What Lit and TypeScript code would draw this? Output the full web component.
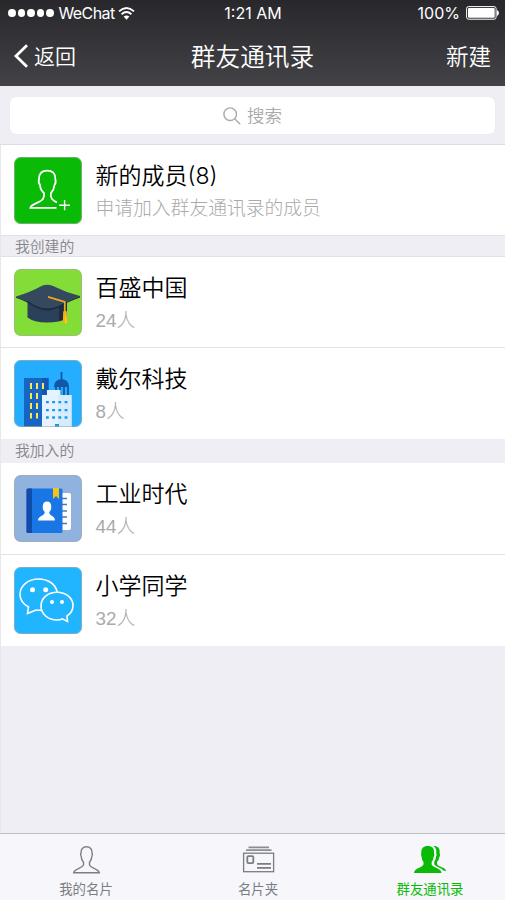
import { LitElement, html, css, svg } from "lit";
import { customElement, property } from "lit/decorators.js";
import { classMap } from "lit/directives/class-map.js";

const art: Record<string, unknown> = {
  add: svg`<rect width="68" height="67" fill="#09bb07"/>
    <path d="M42.5 50.8H16.4C17 46.5 27 45.6 29 41.8Q30.6 39 30 36Q26.3 33 26 28Q24 26 25 22C25 16.5 28 13.6 33.2 13.6C38.5 13.6 41.5 16.5 41.3 22Q42.4 26 40.5 28Q40 33 37 36Q36 39 38 42Q40 44.3 43 45.3" fill="none" stroke="#fff" stroke-width="1.8"/>
    <path d="M45.2 48.3H56M50.6 43V53.3" stroke="#fff" stroke-width="1.4"/>`,
  cap: svg`<rect width="68" height="67" fill="#83dd37"/>
    <path d="M13.5 31H53V49.5Q46 53.5 33 53.5Q20 53.5 13.5 48.5Z" fill="#2b4059"/>
    <path d="M45 34L53 31V49.5L45 51.8Z" fill="#1d2c43"/>
    <path d="M2 27.5Q16 23.5 27 17.3Q33 14.5 39 17Q52 23.5 66 27Q55 30.5 46 36.5Q33 42.5 21 36.5Q13 31 2 27.5Z" fill="#34495e"/>
    <path d="M2 27.5Q13 31 21 36.5Q33 42.5 46 36.5Q55 30.5 66 27V28.6Q55 32 46 38.3Q33 44.5 21 38.3Q13 32.5 2 28.8Z" fill="#1d2c43"/>
    <path d="M34 27.8L50.8 33V44" fill="none" stroke="#f3a51b" stroke-width="1.8"/>
    <path d="M49.2 42.5Q51 41 52.8 42.5L53.2 54.3H48.8Z" fill="#f7ae16"/><path d="M51.5 43L53 54.3H51Z" fill="#ffd11d"/>`,
  city: svg`<rect width="68" height="67" fill="#25aeff"/>
    <path d="M10 18H34.5V67H10Z" fill="#1765c3"/><path d="M28 18H34.5V67H28Z" fill="#1457b2"/>
    <path d="M17 23V29M23 23V29M29 23V29M17 33V39M23 33V39M17 43V49M23 43V49M17 53V58.5M23 53V58.5" stroke="#ffe747" stroke-width="2"/>
    <path d="M47.5 12V20M41 26Q41.5 20.5 47.5 20Q53.5 20.5 54 26ZM42 26V35M46 26V35M50 26V35M54 26V35" fill="#1356a8" stroke="#1356a8" stroke-width="1.8"/>
    <path d="M33 30H46.5V35H57.5V67H28V35H33Z" fill="#e4f3ff"/><path d="M44 35H57.5V67H44Z" fill="#d5ecff"/>
    <path d="M32 42.2H55M32 50.2H55M32 57.5H55" stroke="#1899ef" stroke-width="2.3" stroke-dasharray="2.8 3.4"/>
    <path d="M41 64H45V67H41Z" fill="#1899ef"/>`,
  book: svg`<rect width="68" height="67" fill="#8fb2df"/>
    <rect x="43" y="18" width="14" height="37" rx="2" fill="#fff"/>
    <path d="M48 23.5H53M48 29.5H53M48 36H53M48 42H53M48 48.5H53" stroke="#4c79b4" stroke-width="1.7"/>
    <rect x="12.5" y="13.5" width="36" height="44.5" rx="1.5" fill="#1877e4"/>
    <path d="M14 13.5H18V58H14Q12.5 58 12.5 56.5V15Q12.5 13.5 14 13.5Z" fill="#134bab"/>
    <path d="M39 13H45V24L42 21L39 24Z" fill="#f3c41b"/>
    <path d="M24 45.5C24 40.5 31 41 30.7 37Q28.5 35.5 28.8 32Q28.5 26.5 33 26.5Q37.5 26.5 37.2 32Q37.5 35.5 35.3 37C35 41 41 40.5 41 45.5Z" fill="#fff"/>`,
  chat: svg`<rect width="68" height="67" fill="#22b5ff"/>
    <path d="M28 43Q25.5 43.6 22 43L13.5 46.5L14.5 40C9 37 6 32.5 6 27.5C6 18.5 14.5 12 24.5 12C34 12 41.5 17 43.2 25.2" fill="none" stroke="#fff" stroke-width="1.6"/>
    <path d="M43 25.3C52 25.3 59 31 59 38.5C59 43 57 46.5 53 49L53.5 54.5L48.5 52Q46 53 43 53C34 53 27 47 27 39C27 31 34 25.3 43 25.3Z" fill="none" stroke="#fff" stroke-width="1.6"/>
    <g fill="#fff"><circle cx="18.5" cy="22.7" r="2.5"/><circle cx="31.7" cy="22.7" r="2.5"/><circle cx="38" cy="35" r="2"/><circle cx="48" cy="35" r="2"/></g>`,
};

const tabArt: Record<string, unknown> = {
  card: svg`<path d="M3.6 26.8H29.4C28.5 22.3 20.8 22.5 19.5 19V16.2Q21.7 14 21.8 10.5Q23 8.5 22 7C22.3 3 20 .8 16.5 .8S10.7 3 11 7Q10 8.5 11.2 10.5Q11.3 14 13.5 16.2V19C12.2 22.5 4.5 22.3 3.6 26.8Z" fill="none" stroke="#7a7e83" stroke-width="1.4"/>`,
  folder: svg`<path d="M6.5 1.4H27M4 4.2H29.5" stroke="#8b8e93" stroke-width="1.7"/><rect x="1.6" y="7.2" width="30" height="18.5" fill="none" stroke="#7a7e83" stroke-width="1.3"/>
    <rect x="5.3" y="10.1" width="6" height="7" rx="1" fill="none" stroke="#7a7e83" stroke-width="1.8"/><path d="M15 17.8H29M15 21.9H29" stroke="#7a7e83" stroke-width="1.8"/>`,
  group: svg`<path d="M0 27C.5 21.8 7.5 22.5 9.5 18.5V16Q7.8 14 7.6 10.8Q6.5 9 7.3 7C7 2.5 9.5 0 13.8 0C18.1 0 20.5 2.5 20 7Q20.9 9 19.7 10.8Q19.3 14 17.6 16V18.5C19.6 22.5 27 21.8 27.5 27Z" fill="#09bb07"/>
    <path d="M19.5 0C24 0 26.2 2.5 25.6 7Q26.7 9 25.4 11Q25 14 23 16V18C24.5 21.5 31 20.5 32.2 25L29.3 24.5C27.8 21.5 21 21 20.2 18V16Q22.2 13 21.9 11Q23.3 9 22.2 7Q23 2.5 19.5 0Z" fill="#09bb07"/>`,
};

@customElement("group-row")
class GroupRow extends LitElement {
  @property() icon = "add";
  @property() name = "";
  @property() note = "";

  static styles = css`
    :host { display: flex; box-sizing: border-box; height: 91px; padding: 12px 14px 0; background: #fff; }
    .frame { width: 68px; height: 67px; flex: none; border-radius: 7px; position: relative; overflow: hidden; }
    .frame::after { content: ""; position: absolute; inset: 0; border-radius: 7px; box-shadow: inset 0 0 0 1px rgba(170, 170, 165, .65); }
    svg { display: block; width: 68px; height: 67px; }
    .text { padding-left: 13.5px; white-space: nowrap; }
    .name { font-size: 23px; line-height: 34px; height: 34px; margin-top: 2px; color: #000; font-weight: 350; }
    .note { font-family: "Liberation Sans", "Noto Sans CJK SC", sans-serif; font-size: 18.8px; line-height: 30px; padding-top: 1px; color: #aaa; font-weight: 300; }
  `;

  render() {
    return html`<div class="frame"><svg viewBox="0 0 68 67">${art[this.icon]}</svg></div>
      <div class="text"><div class="name">${this.name}</div><div class="note">${this.note}</div></div>`;
  }
}

@customElement("app-root")
class AppRoot extends LitElement {
  static styles = css`
    :host { display: flex; flex-direction: column; box-sizing: border-box; width: 505px; height: 900px; overflow: hidden; background: #efeef4;
      font-family: Inter, "Noto Sans CJK SC", sans-serif; }
    header { height: 86px; flex: none; color: #fff; background: linear-gradient(#28272c, #434347); }
    .status { display: grid; grid-template-columns: 1fr auto 1fr; align-items: center; height: 26px; padding: 0 6px 0 8px; font: 16px/26px Inter, "Liberation Sans", sans-serif; }
    .carrier, .power { display: flex; align-items: center; }
    .carrier { letter-spacing: -.6px; }
    .time { margin-right: 1px; }
    .power { justify-content: flex-end; gap: 6px; }
    .dots { display: flex; gap: 2px; margin-right: 5px; }
    .dots i { width: 7.5px; height: 8px; border-radius: 50%; background: #fff; }
    .wifi { margin-left: 3px; }
    .nav { display: grid; grid-template-columns: 1fr auto 1fr; align-items: center; height: 58px; padding: 0 14px; font-weight: 350; }
    .back { display: flex; align-items: center; gap: 5px; font-size: 21px; }
    .back svg { margin-top: 1px; }
    .title { font-size: 24.7px; }
    .create { font-size: 22.5px; text-align: right; }
    .search { height: 59px; flex: none; box-sizing: border-box; padding: 11px 10px 10px; border-bottom: 1px solid #dedee2; }
    .box { display: flex; align-items: center; justify-content: center; gap: 6px; height: 37px; border-radius: 6px; background: #fff; color: #aaa; font-size: 17.5px; font-weight: 350; box-shadow: 0 0 1px #ddd; }
    .box span { margin-top: -2px; }
    .section { box-sizing: border-box; height: 22px; padding-left: 14px; font-size: 14.8px; line-height: 22px; color: #85858a; border: solid #e2e2e6; border-width: 1px 0; font-weight: 350; }
    .section.tall { height: 24px; line-height: 23px; border-color: #efeef4; }
    .rule { height: 1px; background: #e3e3e6; }
    .list { flex: 1; border-left: 1px solid #e8e8ec; }
    .list group-row { padding-left: 13px; }
    .list .short { height: 90px; }
    footer { display: grid; grid-template-columns: repeat(3, 172px); height: 67px; box-sizing: border-box; border-top: 1px solid #c0c0c4; background: #f6f6fb; }
    .tab { display: flex; flex-direction: column; align-items: center; padding-top: 12px; font-size: 13.4px; line-height: 20px; color: #7a7e83; }
    .tab svg { width: 33px; height: 29px; overflow: visible; margin-bottom: 3.5px; }
    .tab.active { color: #09bb07; }
  `;

  render() {
    const tabs = [["card", "我的名片"], ["folder", "名片夹"], ["group", "群友通讯录"]];
    return html`
      <header>
        <div class="status">
          <div class="carrier"><span class="dots"><i></i><i></i><i></i><i></i><i></i></span>WeChat
            <svg class="wifi" width="17" height="13" viewBox="0 0 17 13" fill="none" stroke="#fff" stroke-width="1.9"><path d="M1 4.4Q8.5-2.2 16 4.4M3.6 7.2Q8.5 3 13.4 7.2"/><path d="M5.6 9.6Q8.5 7.2 11.4 9.6L8.5 12.7Z" fill="#fff" stroke="none"/></svg>
          </div>
          <div class="time">1:21 AM</div>
          <div class="power">100%<svg width="33" height="14" viewBox="0 0 33 14"><rect x=".6" y=".6" width="29.5" height="12.6" rx="2" fill="none" stroke="#fff"/><rect x="2" y="2" width="26.7" height="9.8" rx="1" fill="#fff"/><path d="M31 4Q33 5 33 7T31 10Z" fill="#fff"/></svg></div>
        </div>
        <div class="nav">
          <div class="back"><svg width="15" height="24" viewBox="0 0 15 24"><path d="M13 1.3L2 12L13 22.7" fill="none" stroke="#fff" stroke-width="2.8"/></svg>返回</div>
          <div class="title">群友通讯录</div>
          <div class="create">新建</div>
        </div>
      </header>
      <div class="search"><div class="box"><svg width="18" height="18" viewBox="0 0 18 18" fill="none" stroke="#aaa" stroke-width="1.4"><circle cx="7.2" cy="7.2" r="6.3"/><path d="M11.7 11.7L17.2 17.2"/></svg><span>搜索</span></div></div>
      <div class="list">
        <group-row class="short" icon="add" name="新的成员(8)" note="申请加入群友通讯录的成员"></group-row>
        <div class="section">我创建的</div>
        <group-row class="short" icon="cap" name="百盛中国" note="24人"></group-row>
        <div class="rule"></div>
        <group-row icon="city" name="戴尔科技" note="8人"></group-row>
        <div class="section tall">我加入的</div>
        <group-row icon="book" name="工业时代" note="44人"></group-row>
        <div class="rule"></div>
        <group-row icon="chat" name="小学同学" note="32人"></group-row>
      </div>
      <footer>
        ${tabs.map(([icon, label], i) => html`<div class=${classMap({ tab: true, active: i === 2 })}><svg viewBox="0 0 33 29">${tabArt[icon]}</svg>${label}</div>`)}
      </footer>`;
  }
}
